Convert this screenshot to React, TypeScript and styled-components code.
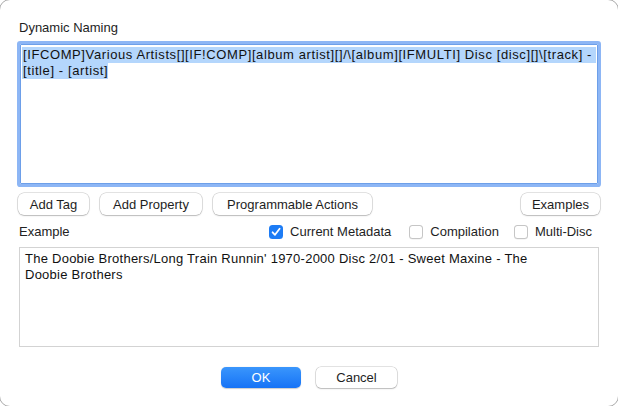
import React from "react";
import styled, { createGlobalStyle } from "styled-components";

const Global = createGlobalStyle`
  html, body { margin: 0; padding: 0; background: #ffffff; }
  body { font-family: "Liberation Sans", Arial, sans-serif; font-size: 13px; color: #222222; overflow: hidden; }
  * { box-sizing: border-box; }
`;

const Frame = styled.div`
  width: 620px;
  height: 408px;
  margin: -1px;
  border: 1px solid #a9a9a9;
  border-radius: 11px;
  background: #ffffff;
  display: flex;
  flex-direction: column;
  padding: 20px 19px 0 19px;
`;

const Label = styled.div`
  height: 16px;
  line-height: 16px;
  color: #1e1e1e;
`;

const Editor = styled.div`
  margin: 8px 1px 0 1px;
  height: 140px;
  border: 1px solid #6d9fe9;
  box-shadow: 0 0 0 3px #8db6f5;
  border-radius: 1px;
  padding: 2px 1px;
  display: flex;
  flex-direction: column;
  align-items: flex-start;
`;

const SelLine = styled.span<{ $full?: boolean }>`
  display: block;
  white-space: pre;
  background: #b4d6fc;
  line-height: 16px;
  height: 16px;
  padding-left: 1px;
  letter-spacing: 0.6px;
  width: ${(p) => (p.$full ? "574px" : "auto")};
  color: #111111;
`;

const ButtonRow = styled.div`
  display: flex;
  align-items: center;
  gap: 11px;
  margin-top: 9px;
  margin-left: -1px;
  margin-right: -1px;
`;

const Button = styled.button<{ $w: number }>`
  width: ${(p) => p.$w}px;
  height: 22px;
  border: none;
  border-radius: 6px;
  background: #ffffff;
  box-shadow: 0 0 0 0.5px rgba(0, 0, 0, 0.22), 0 1px 1.5px rgba(0, 0, 0, 0.18);
  font-family: inherit;
  font-size: 13px;
  color: #1e1e1e;
  padding: 0;
  display: flex;
  align-items: center;
  justify-content: center;
`;

const Spacer = styled.div`
  flex: 1;
`;

const ExampleRow = styled.div`
  display: flex;
  align-items: center;
  height: 17px;
  margin-top: 8px;
`;

const Checks = styled.div`
  margin-left: auto;
  display: flex;
  align-items: center;
  margin-right: 7px;
`;

const CheckItem = styled.label<{ $ml?: number }>`
  display: flex;
  align-items: center;
  gap: 7px;
  margin-left: ${(p) => p.$ml ?? 0}px;
  color: #1e1e1e;
`;

const Box = styled.span<{ $on?: boolean }>`
  width: 14px;
  height: 14px;
  border-radius: 3.5px;
  display: flex;
  align-items: center;
  justify-content: center;
  background: ${(p) => (p.$on ? "#1d7cf5" : "#ffffff")};
  box-shadow: ${(p) =>
    p.$on ? "none" : "inset 0 0 0 1px #c6c6c6, 0 0.5px 0.5px rgba(0,0,0,0.08)"};
`;

const ExampleBox = styled.div`
  margin-top: 7px;
  height: 100px;
  border: 1px solid #d3d3d3;
  padding: 3px 5px;
  line-height: 16px;
  white-space: pre;
  letter-spacing: 0.25px;
  color: #111111;
`;

const Footer = styled.div`
  display: flex;
  justify-content: center;
  gap: 15px;
  margin-top: 20px;
  margin-left: -19px;
  margin-right: -19px;
`;

const PrimaryButton = styled.button`
  width: 80px;
  height: 21px;
  border: none;
  border-radius: 5px;
  background: linear-gradient(#3a96fc, #1673f6);
  box-shadow: 0 0.5px 1px rgba(0, 0, 0, 0.2);
  color: #ffffff;
  font-family: inherit;
  font-size: 13px;
  padding: 0;
`;

const SecondaryButton = styled.button`
  width: 81px;
  height: 21px;
  border: none;
  border-radius: 5px;
  background: #ffffff;
  box-shadow: 0 0 0 0.5px rgba(0, 0, 0, 0.22), 0 1px 1.5px rgba(0, 0, 0, 0.18);
  color: #1e1e1e;
  font-family: inherit;
  font-size: 13px;
  padding: 0;
`;

const Check = () => (
  <svg width="10" height="10" viewBox="0 0 10 10">
    <path d="M1.6 5.3 L4 7.8 L8.6 1.8" fill="none" stroke="#fff" strokeWidth="1.8" strokeLinecap="round" strokeLinejoin="round" />
  </svg>
);

export default function App() {
  return (
    <>
      <Global />
      <Frame>
        <Label>Dynamic Naming</Label>
        <Editor>
          <SelLine $full>{"[IFCOMP]Various Artists[][IF!COMP][album artist][]/\\[album][IFMULTI] Disc [disc][]\\[track] -"}</SelLine>
          <SelLine>{"[title] - [artist]"}</SelLine>
        </Editor>
        <ButtonRow>
          <Button $w={71}>Add Tag</Button>
          <Button $w={102}>Add Property</Button>
          <Button $w={159}>Programmable Actions</Button>
          <Spacer />
          <Button $w={79}>Examples</Button>
        </ButtonRow>
        <ExampleRow>
          <span>Example</span>
          <Checks>
            <CheckItem>
              <Box $on>
                <Check />
              </Box>
              Current Metadata
            </CheckItem>
            <CheckItem $ml={18}>
              <Box />
              Compilation
            </CheckItem>
            <CheckItem $ml={15}>
              <Box />
              Multi-Disc
            </CheckItem>
          </Checks>
        </ExampleRow>
        <ExampleBox>
          {"The Doobie Brothers/Long Train Runnin' 1970-2000 Disc 2/01 - Sweet Maxine - The\nDoobie Brothers"}
        </ExampleBox>
        <Footer>
          <PrimaryButton>OK</PrimaryButton>
          <SecondaryButton>Cancel</SecondaryButton>
        </Footer>
      </Frame>
    </>
  );
}
